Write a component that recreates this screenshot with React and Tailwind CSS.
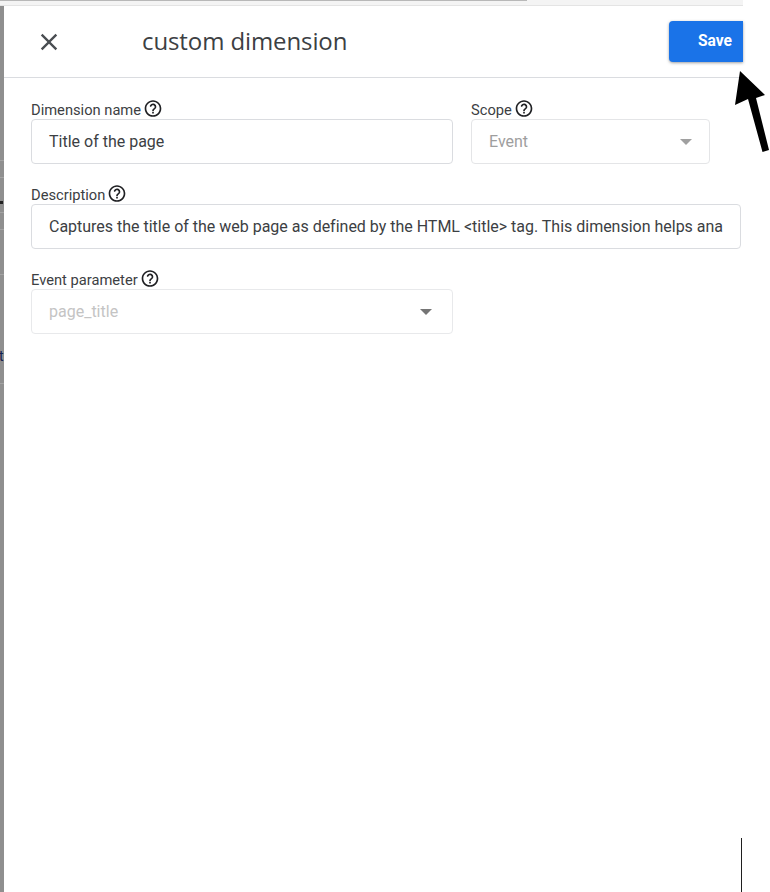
function Help() {
  return (
    <svg viewBox="0 0 24 24" className="w-[20px] h-[20px] shrink-0 -translate-y-[1.5px]" fill="#202124">
      <path d="M12 2C6.48 2 2 6.48 2 12s4.48 10 10 10 10-4.48 10-10S17.52 2 12 2zm0 18c-4.41 0-8-3.59-8-8s3.59-8 8-8 8 3.59 8 8-3.59 8-8 8zm-1-4h2v2h-2v-2zm1.61-9.96c-2.06-.3-3.88.97-4.43 2.79-.18.58.26 1.17.87 1.17h.2c.41 0 .74-.29.88-.67.32-.89 1.27-1.5 2.3-1.28.95.2 1.65 1.13 1.57 2.1-.1 1.34-1.62 1.63-2.45 2.88 0 .01-.01.01-.01.02-.01.02-.02.03-.03.05-.09.15-.18.32-.25.5-.01.03-.03.05-.04.08-.01.02-.01.04-.02.07-.12.34-.2.75-.2 1.25h2c0-.42.11-.77.28-1.07.02-.03.03-.06.05-.09.08-.14.18-.27.28-.39.01-.01.02-.03.03-.04.1-.12.21-.23.33-.34.96-.91 2.26-1.65 1.99-3.56-.24-1.74-1.61-3.21-3.35-3.47z" />
    </svg>
  );
}

function Caret({ color }) {
  return <span className="w-0 h-0 border-x-[6px] border-x-transparent border-t-[6px]" style={{ borderTopColor: color }} />;
}

function Label({ children }) {
  return (
    <div className="flex items-center gap-[2px] h-[19px] text-[14.7px] leading-[19px] text-[#3c4043]">
      <span className="translate-y-[1px]">{children}</span>
      <Help />
    </div>
  );
}

const stripLines = [160, 177, 212, 229, 274, 383];

export default function App() {
  return (
    <div className="relative w-[770px] h-[892px] bg-white overflow-hidden font-['Roboto',sans-serif]">
      <div className="h-[6px] w-[743px] bg-[#f4f4f4] border-b border-[#e4e4e4]">
        <div className="h-[1px] w-[527px] bg-[#b8b8b8]" />
      </div>
      <div className="flex h-[886px]">
        <div className="w-[4px] bg-[#8f8f8f] shrink-0" />
        <div className="w-[739px] shrink-0 flex flex-col">
          <header className="h-[72px] shrink-0 flex items-center border-b border-[#dadce0]">
            <svg viewBox="0 0 24 24" className="w-[28px] h-[28px] ml-[31px] shrink-0" fill="#4a4e52">
              <path d="M19 6.41 17.59 5 12 10.59 6.41 5 5 6.41 10.59 12 5 17.59 6.41 19 12 13.41 17.59 19 19 17.59 13.41 12z" />
            </svg>
            <h1 className="ml-[79px] mb-[2px] text-[24px] leading-[32px] text-[#3c4043] font-['Open_Sans',sans-serif] tracking-[-0.1px]">custom dimension</h1>
            <button className="ml-auto w-[74px] h-[41px] mb-[1px] pt-[2px] bg-[#1a73e8] text-white text-[15.6px] font-bold rounded-l-[4px] shadow-[0_1px_3px_rgba(60,64,67,0.5)] flex items-center justify-end pr-[11px]">Save</button>
          </header>
          <main className="pl-[27px] pt-[22px] flex flex-col">
            <div className="flex gap-[18px]">
              <div className="w-[422px]">
                <Label>Dimension name</Label>
                <div className="h-[45px] border border-[#dadce0] rounded-[4px] flex items-center px-[17px] text-[16px] text-[#3c4043]">Title of the page</div>
              </div>
              <div className="w-[239px]">
                <Label>Scope</Label>
                <div className="h-[45px] border border-[#e4e5e7] rounded-[4px] flex items-center justify-between px-[17px] text-[16px] text-[#9e9e9e]">
                  <span>Event</span>
                  <Caret color="#a0a0a0" />
                </div>
              </div>
            </div>
            <div className="mt-[21px] w-[710px]">
              <Label>Description</Label>
              <div className="h-[45px] border border-[#dadce0] rounded-[4px] flex items-center px-[17px] text-[16px] text-[#3c4043] tracking-[-0.01px]">
                <span className="whitespace-nowrap">Captures the title of the web page as defined by the HTML &lt;title&gt; tag. This dimension helps ana</span>
              </div>
            </div>
            <div className="mt-[21px] w-[422px]">
              <Label>Event parameter</Label>
              <div className="h-[45px] border border-[#e8e9eb] rounded-[4px] flex items-center justify-between pl-[17px] pr-[20px] text-[16px] text-[#c4c4c4]">
                <span>page_title</span>
                <Caret color="#757575" />
              </div>
            </div>
          </main>
        </div>
      </div>
      {stripLines.map((y) => (
        <div key={y} className="absolute left-0 w-[4px] h-[1px] bg-[#a3a3a3]" style={{ top: y }} />
      ))}
      <div className="absolute left-0 top-[201px] w-[3px] h-[3px] bg-[#222222]" />
      <span className="absolute left-[-1px] top-[346px] w-[5px] overflow-hidden text-[14px] leading-[20px] text-[#12214f]">t</span>
      <div className="absolute left-[741px] top-[838px] w-[1px] h-[54px] bg-[#1f1f1f]" />
      <svg className="absolute left-[730px] top-[68px]" width="40" height="90" viewBox="0 0 40 90">
        <path d="M10 3 L5 37 L18 31 L32.5 84 L39 82 L26 30 L35 27 Z" fill="#000" />
      </svg>
    </div>
  );
}
